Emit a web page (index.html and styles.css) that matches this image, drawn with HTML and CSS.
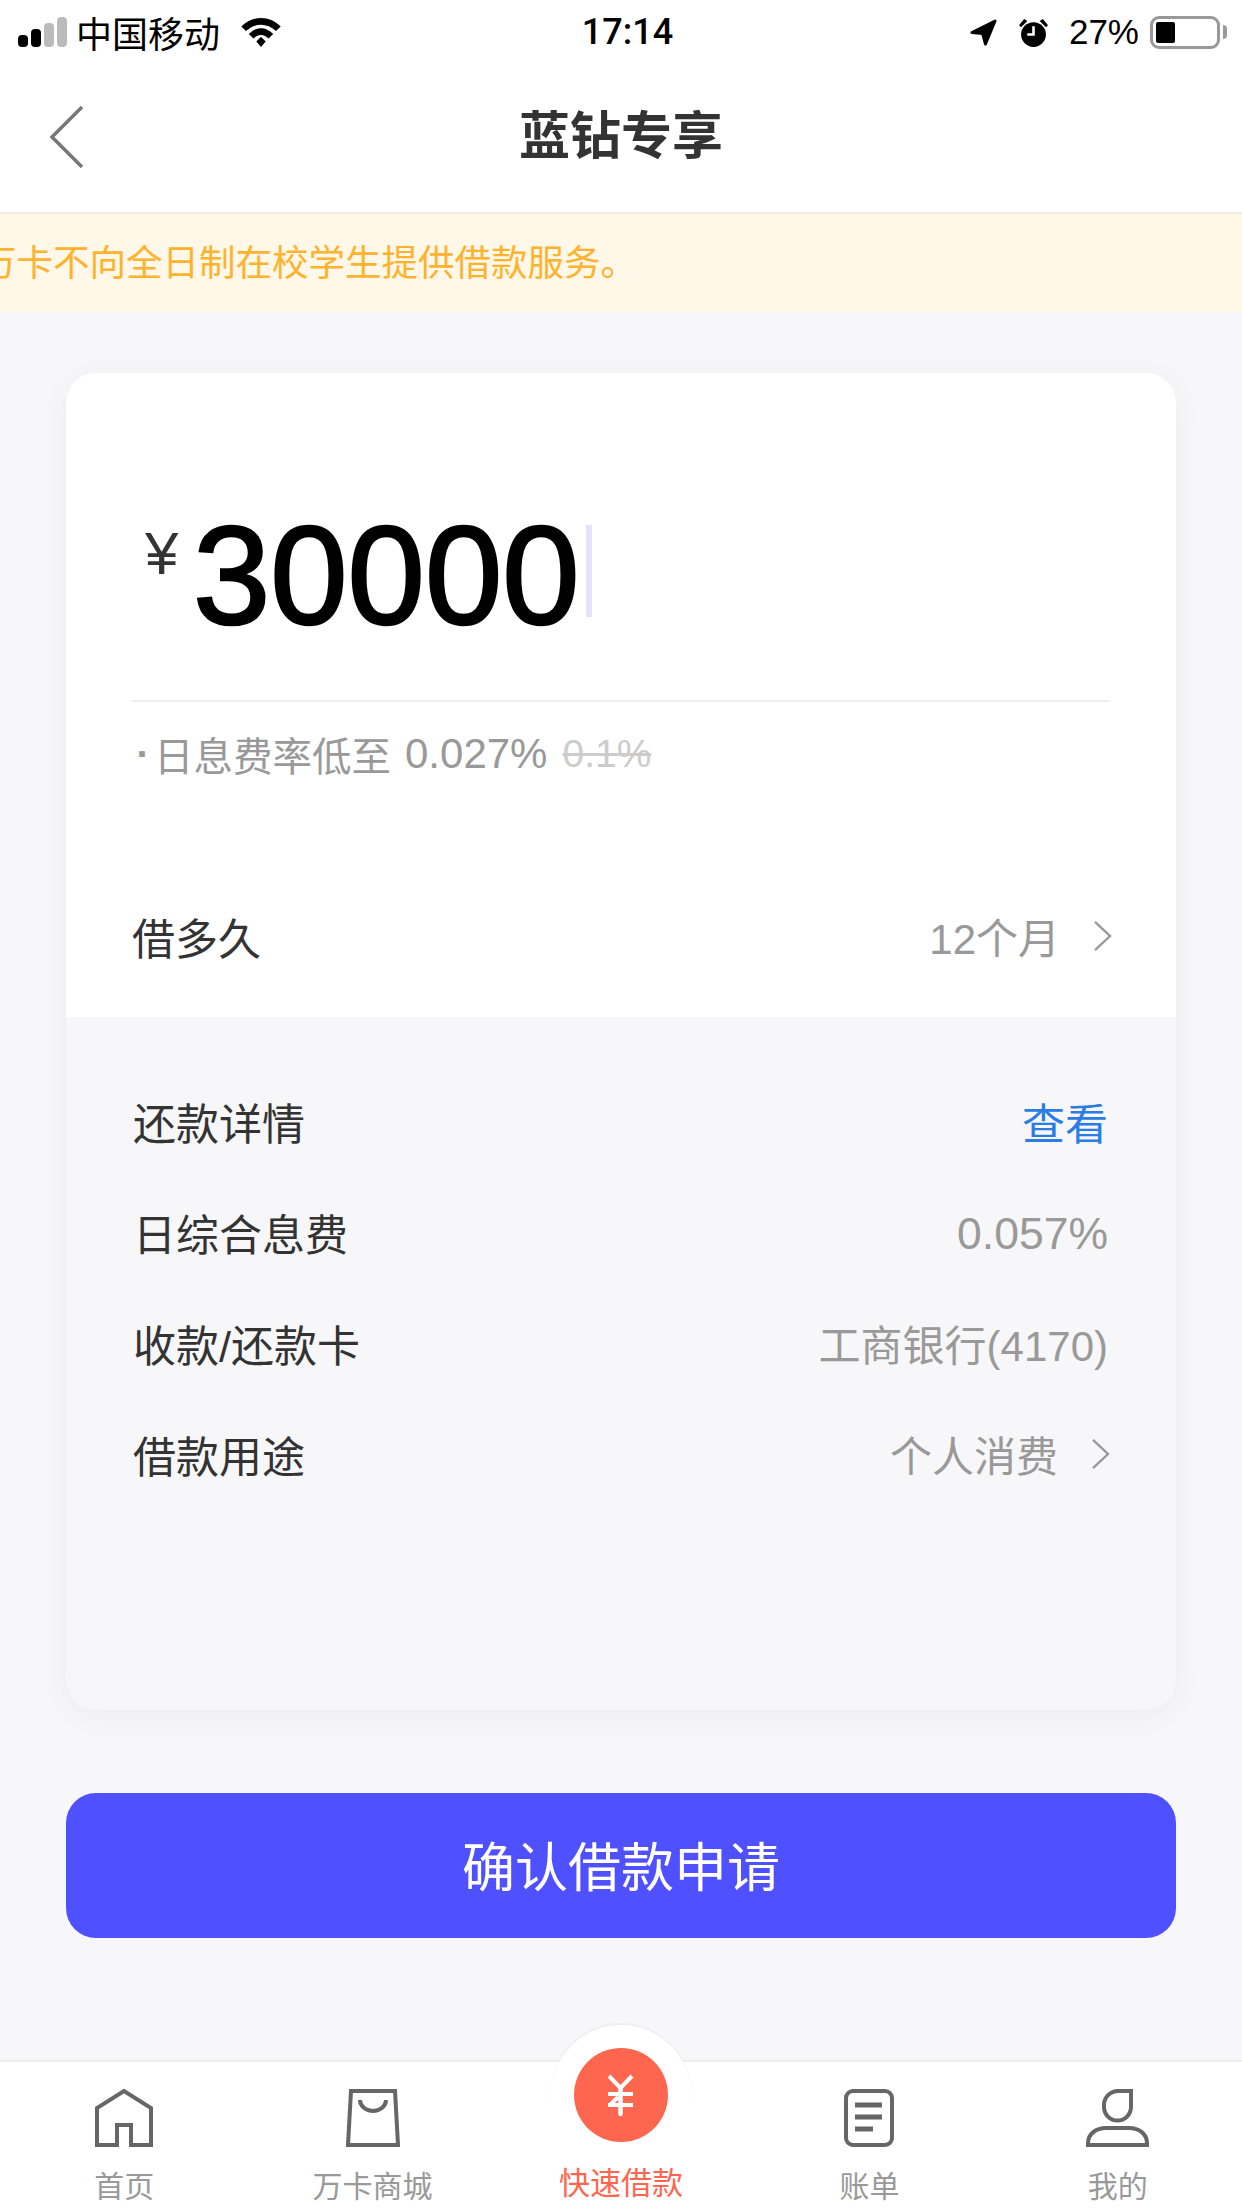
FILE: index.html
```html
<!DOCTYPE html>
<html lang="zh">
<head>
<meta charset="utf-8">
<title>蓝钻专享</title>
<link rel="stylesheet" href="styles.css">
</head>
<body>
<div class="app">
  <header class="status">
    <div class="status-left">
      <div class="signal"><i class="b1"></i><i class="b2"></i><i class="b3"></i><i class="b4"></i></div>
      <span class="carrier">中国移动</span>
      <svg class="wifi" viewBox="0 0 42 32"><path d="M0 10 C12 -2 30 -2 42 10 L37 15 C27 6 15 6 5 15Z M8 18 C16 10 26 10 34 18 L29 23 C24 18 18 18 13 23Z M16 26 L21 21 L26 26 L21 32Z" fill="#000"/></svg>
    </div>
    <div class="time">17:14</div>
    <div class="status-right">
      <svg class="loc" viewBox="0 0 28 28"><path d="M2 14 L26 2 L16 26 L13 15Z" fill="#000" stroke="#000" stroke-width="3" stroke-linejoin="round"/></svg>
      <svg class="alarm" viewBox="0 0 28 28"><circle cx="14" cy="16" r="12" fill="#000"/><path d="M0 7 L5 1 L8 3 L2 9Z M28 7 L23 1 L20 3 L26 9Z" fill="#000"/><path d="M14 8 V16 H8" fill="none" stroke="#fff" stroke-width="2.5"/></svg>
      <span class="pct">27%</span>
      <div class="battery"><div class="level"></div></div>
      <div class="nub"></div>
    </div>
  </header>

  <nav class="nav">
    <svg class="back" viewBox="0 0 34 62"><path d="M32 1 L2 31 L32 61" fill="none" stroke="#777" stroke-width="3.5"/></svg>
    <h1 class="title">蓝钻专享</h1>
  </nav>

  <div class="notice"><span class="notice-text">万卡不向全日制在校学生提供借款服务。</span></div>

  <main class="content">
    <section class="card">
      <div class="card-top">
        <div class="amount">
          <span class="yen">¥</span>
          <span class="num">30000</span>
          <span class="caret"></span>
        </div>
        <div class="rate">
          <span class="dot">·</span><span>日息费率低至</span><span class="rate-num">0.027%</span>
          <s class="old">0.1%</s>
        </div>
        <div class="row term">
          <span>借多久</span>
          <span class="val">12个月<svg class="chev" viewBox="0 0 20 34"><path d="M2 2 L18 17 L2 32" fill="none" stroke="#999" stroke-width="2.5"/></svg></span>
        </div>
      </div>
      <div class="card-bottom">
        <div class="row"><span>还款详情</span><span class="link">查看</span></div>
        <div class="row"><span>日综合息费</span><span class="val fee">0.057%</span></div>
        <div class="row"><span>收款/还款卡</span><span class="val">工商银行(4170)</span></div>
        <div class="row"><span>借款用途</span>
          <span class="val">个人消费<svg class="chev" viewBox="0 0 20 34"><path d="M2 2 L18 17 L2 32" fill="none" stroke="#999" stroke-width="2.5"/></svg></span></div>
      </div>
    </section>
    <button class="submit">确认借款申请</button>
  </main>

  <footer class="tabbar">
    <div class="bump"></div>
    <div class="tab">
      <svg class="ico" width="58" height="58" viewBox="0 0 58 58"><path d="M2 56 V19 L29 2 L56 19 V56 H36 V36 H22 V56Z" fill="none" stroke="#666" stroke-width="4"/></svg>
      <span>首页</span>
    </div>
    <div class="tab">
      <svg class="ico" width="54" height="58" viewBox="0 0 54 58"><path d="M5 2 H49 L52 56 H2Z M14 11 a13 11 0 0 0 26 0" fill="none" stroke="#666" stroke-width="4"/></svg>
      <span>万卡商城</span>
    </div>
    <div class="tab active">
      <div class="coin"><svg width="30" height="44" viewBox="0 0 30 44"><path d="M3 3 L14.5 15 L26 3 M2 21 H27 M2 32 H27 M4 32 L12 24" fill="none" stroke="#fff" stroke-width="4"/><path d="M14.5 15 V41" fill="none" stroke="#fff" stroke-width="4.5" stroke-linecap="round"/></svg></div>
      <span>快速借款</span>
    </div>
    <div class="tab">
      <svg class="ico" width="50" height="58" viewBox="0 0 50 58"><rect x="2" y="2" width="46" height="54" rx="7" fill="none" stroke="#666" stroke-width="4"/><path d="M11 16 H38 M11 28 H38 M11 40 H29" stroke="#666" stroke-width="5"/></svg>
      <span>账单</span>
    </div>
    <div class="tab">
      <svg class="ico" width="63" height="58" viewBox="0 0 63 58"><path d="M45 2 V18 a13 13 0 0 1 -27 0 V16 a14 14 0 0 1 14 -14Z M2 56 V54 C2 45 10 39 20 39 H43 C53 39 61 45 61 54 V56Z" fill="none" stroke="#666" stroke-width="4"/></svg>
      <span>我的</span>
    </div>
  </footer>
</div>
</body>
</html>
```
FILE: styles.css
```css
* { box-sizing: border-box; }
html, body { margin: 0; padding: 0; }
body { font-family: "Liberation Sans", "Noto Sans CJK SC", sans-serif; color: #333; }
.app { width: 1242px; height: 2208px; display: flex; flex-direction: column; overflow: hidden; background: #f7f7f9; position: relative; }

.status { height: 64px; background: #fff; display: grid; grid-template-columns: 1fr auto 1fr; align-items: center; padding: 0 15px 0 18px; color: #000; font-size: 35px; }
.status-left, .status-right { display: flex; align-items: center; }
.status-right { justify-content: flex-end; }
.signal { display: flex; align-items: flex-end; gap: 3px; height: 30px; margin-right: 9px; }
.signal i { display: block; width: 10px; border-radius: 4px; background: #000; }
.signal .b1 { height: 12px; }
.signal .b2 { height: 18px; }
.signal .b3 { height: 24px; background: #bbb; }
.signal .b4 { height: 30px; background: #bbb; }
.carrier { font-size: 36px; }
.wifi { width: 42px; height: 30px; margin-left: 20px; }
.time { font-family: Roboto, sans-serif; font-size: 36px; font-weight: 500; margin-left: 10px; }
.loc { width: 27px; height: 27px; margin-right: 22px; }
.alarm { width: 29px; height: 29px; margin-right: 21px; }
.pct { margin-right: 11px; }
.battery { width: 70px; height: 33px; border: 3px solid #999; border-radius: 9px; padding: 3px; }
.level { width: 19px; height: 100%; background: #000; border-radius: 2px; }
.nub { width: 4px; height: 14px; background: #999; margin-left: 3px; border-radius: 0 4px 4px 0; }

.nav { height: 150px; background: #fff; display: flex; align-items: center; justify-content: center; position: relative; border-bottom: 2px solid #eee; }
.back { position: absolute; left: 50px; top: 42px; width: 34px; height: 62px; }
.title { margin: 0 0 12px; font-size: 51px; font-weight: 700; color: #333; }

.notice { height: 98px; background: #fff7e8; display: flex; align-items: center; overflow: hidden; }
.notice-text { font-size: 36.5px; color: #fdb32d; white-space: nowrap; margin-left: -20px; margin-bottom: 6px; }

.content { flex: 1; padding: 61px 66px 0; display: flex; flex-direction: column; }
.card { height: 1337px; border-radius: 30px; overflow: hidden; background: #f7f7f9; box-shadow: 0 6px 30px rgba(60, 60, 90, .06); display: flex; flex-direction: column; }
.card-top { height: 644px; background: #fff; padding: 0 66px; display: flex; flex-direction: column; }
.amount { height: 329px; border-bottom: 2px solid #eee; display: flex; align-items: flex-start; padding-top: 124px; }
.yen { font-size: 60px; line-height: 70px; color: #333; margin: 22px 0 0 13px; width: 48px; }
.num { font-size: 139px; line-height: 158px; color: #000; -webkit-text-stroke: 2.5px #000; }
.caret { width: 6px; height: 92px; background: #e3e3fb; margin: 28px 0 0 6px; }
.rate { font-size: 39.5px; color: #999; margin-top: 23px; display: flex; align-items: center; }
.dot { width: 22px; font-weight: 700; text-align: center; }
.rate-num { font-size: 42px; margin-left: 14px; }
.old { color: #ccc; margin-left: 15px; font-size: 39px; }
.row { display: flex; justify-content: space-between; align-items: center; font-size: 43px; color: #333; height: 111px; }
.term { margin-top: auto; margin-bottom: 26px; }
.val { color: #999; display: flex; align-items: center; font-size: 42px; }
.fee { font-size: 44.5px; padding-top: 4px; }
.chev { width: 19px; height: 32px; margin-left: 33px; margin-right: -2px; }
.link { color: #2b7de3; }
.card-bottom { padding: 48px 68px 0 67px; }

.submit { display: block; width: 100%; height: 145px; margin-top: 83px; border: 0; border-radius: 30px; background: #4f50ff; color: #fff; font: inherit; font-size: 53px; padding: 0 0 4px; }

.tabbar { height: 148px; background: #fff; border-top: 2px solid #eee; display: grid; grid-template-columns: repeat(5, 1fr); position: relative; }
.bump { position: absolute; left: 551px; top: -37px; width: 140px; height: 140px; border-radius: 50%; background: #fff; box-shadow: 0 -2px 2px rgba(0,0,0,.04); clip-path: inset(-6px -6px 37px -6px); }
.tab { display: flex; flex-direction: column; align-items: center; font-size: 30px; color: #999; position: relative; }
.ico { margin-top: 27px; }
.tab span { margin-top: 20px; line-height: 40px; }
.active { color: #ff664f; font-size: 31px; }
.active .coin + span { margin-top: 22px; line-height: 40px; }
.coin { width: 94px; height: 94px; margin-top: -14px; border-radius: 50%; background: #ff664f; display: flex; align-items: center; justify-content: center; }
```
